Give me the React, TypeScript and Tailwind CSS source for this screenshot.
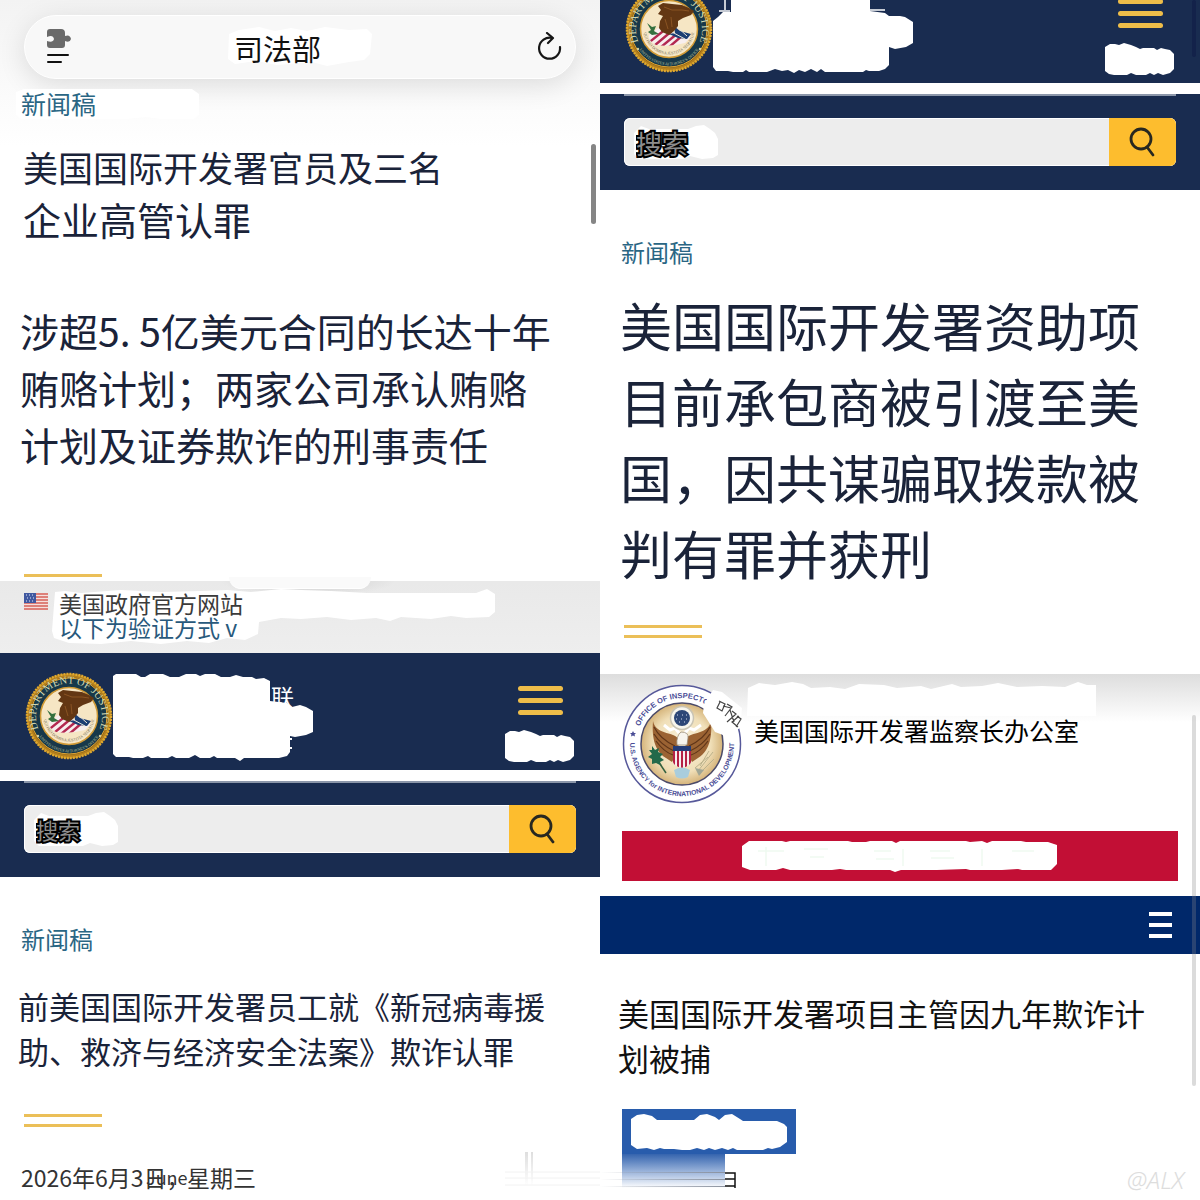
import React from "react";

function JusticeSeal({ id }: { id: string }) {
  return (
    <svg viewBox="0 0 88 88" className="h-[88px] w-[88px] shrink-0" role="img" aria-label="Department of Justice">
      <defs>
        <path id={`${id}-top`} d="M16 62 A33 33 0 1 1 72 62" />
        <path id={`${id}-low`} d="M9 54 A36.500 36.500 0 0 0 79 54" />
        <path id={`${id}-motto`} d="M18.500 44 A25.500 25.500 0 0 0 69.500 44" />
        <clipPath id={`${id}-shield`}>
          <path d="M24 50 L33 43 L66 52 L60 58 Q45 62 31 60 Q23 56 24 50Z" />
        </clipPath>
      </defs>
      <circle cx="44" cy="44" r="42.500" fill="#b5801d" />
      <circle cx="44" cy="44" r="42" fill="none" stroke="#e0a92f" strokeWidth="2.500" strokeDasharray="2 1" />
      <circle cx="44" cy="44" r="39" fill="#8a5f17" />
      <circle cx="44" cy="44" r="38" fill="#17384a" stroke="#dca433" strokeWidth="1" />
      <circle cx="44" cy="44" r="28.500" fill="#f6e6c4" stroke="#d09a35" strokeWidth="1.500" />
      <text fontFamily="Liberation Serif, serif" fontSize="10.500" fill="#d3d8b0">
        <textPath href={`#${id}-top`} startOffset="50%" textAnchor="middle">DEPARTMENT OF JUSTICE</textPath>
      </text>
      <text fontFamily="Liberation Serif, serif" fontSize="4" fill="#b9c19c">
        <textPath href={`#${id}-low`} startOffset="50%" textAnchor="middle">UNITED STATES ATTORNEY'S OFFICE</textPath>
      </text>
      <text fontFamily="Liberation Serif, serif" fontSize="4" fill="#736c58">
        <textPath href={`#${id}-motto`} startOffset="50%" textAnchor="middle">QUI PRO DOMINA JUSTITIA SEQUITUR</textPath>
      </text>
      <g clipPath={`url(#${id}-shield)`}>
        <rect x="22" y="42" width="46" height="22" fill="#f7eeee" />
        <path d="M22 59 L42 43 M29 61 L48 45 M36 62 L53 48 M43 63 L58 50" stroke="#b32850" strokeWidth="2.400" />
      </g>
      <path d="M22 38 L27 42 L31 41 L29 46 L34 49 L27 50 L23 47 L26 45 Z" fill="#35703f" />
      <path d="M49 41 L55 46 L66 49 L62 54 L53 53 L44 49 L50 48Z" fill="#1c3e73" />
      <path d="M50 40 L62 51 M47 47 L60 54" stroke="#e8e4d8" strokeWidth="1" />
      <path d="M33 21 L38 18 L47 19 L57 20 L64 23 L69 26 L66 30 L58 33 L53 36 L53 41 L49 46 L44 50 L37 47 L34 43 L35 36 L38 31 L33 29 L36 25Z" fill="#633713" />
      <path d="M39 22 L47 25 L57 25 L64 26 M40 34 L43 44 M46 32 L47 42" stroke="#8a5423" strokeWidth="1" fill="none" />
      <circle cx="13" cy="64" r="1.200" fill="#d6d1a0" />
      <circle cx="75" cy="64" r="1.200" fill="#d6d1a0" />
    </svg>
  );
}

function InspectorSeal() {
  return (
    <svg viewBox="0 0 120 120" className="h-[120px] w-[120px] shrink-0" role="img" aria-label="Office of Inspector General">
      <defs>
        <path id="oig-top" d="M14 60 A46 46 0 0 1 106 60" />
        <path id="oig-low" d="M9 50 A52 52 0 1 0 111 50" />
        <radialGradient id="oig-fill">
          <stop offset="0" stopColor="#fbf4df" />
          <stop offset="0.700" stopColor="#f0dfb8" />
          <stop offset="1" stopColor="#d5b47a" />
        </radialGradient>
        <clipPath id="oig-shield">
          <path d="M51 62 H69 V78 Q68 82 60 84 Q52 82 51 78Z" />
        </clipPath>
      </defs>
      <circle cx="60" cy="60" r="58.500" fill="#fff" stroke="#57599a" strokeWidth="1.500" />
      <circle cx="60" cy="60" r="41" fill="url(#oig-fill)" stroke="#4b4a68" strokeWidth="1.500" />
      <g fontFamily="Liberation Sans, sans-serif" fontWeight="700" fill="#4a4d96">
        <text fontSize="7.500"><textPath href="#oig-top" startOffset="18">OFFICE OF INSPECTOR</textPath></text>
        <text fontSize="6.800"><textPath href="#oig-low" startOffset="50%" textAnchor="middle">U.S. AGENCY for INTERNATIONAL DEVELOPMENT</textPath></text>
      </g>
      <path d="M11 47 l1 2 2 0 -1.500 1.500 .5 2 -2-1 -2 1 .5-2 -1.500-1.500 2 0Z" fill="#4a4d96" />
      <path d="M57 55 C50 47 34 51 31 37 C30 50 31 66 44 74 L50 78 L56 67Z M63 55 C70 47 86 51 89 37 C90 50 89 66 76 74 L70 78 L64 67Z" fill="#9b6333" />
      <path d="M32 43 Q38 55 53 62 M32 50 Q39 61 52 67 M34 57 Q42 68 51 71 M88 43 Q82 55 67 62 M88 50 Q81 61 68 67 M86 57 Q78 68 69 71" stroke="#5f3518" strokeWidth="1.200" fill="none" />
      <path d="M42 41 L48 46 L53 44 L57 49 M79 41 L72 46 L67 44 L63 49" stroke="#fff" strokeWidth="3" fill="none" />
      <circle cx="60" cy="34" r="11.500" fill="#f8f6ed" stroke="#c9c4b4" strokeWidth="1.500" />
      <circle cx="60" cy="34" r="8" fill="#2d4777" />
      <path d="M55 31h1m4 0h1m3 0h1M54 35h1m4 0h1m4 0h1M57 38h1m4 0h1" stroke="#d8def0" strokeWidth="1.200" />
      <path d="M55 61 Q54 52 59 48 Q67 48 66 54 L65 61Z" fill="#f7f5ee" stroke="#9a8d78" strokeWidth="0.800" />
      <g clipPath="url(#oig-shield)">
        <rect x="51" y="61" width="18" height="24" fill="#f6edef" />
        <path d="M52 61v24M56 61v24M60 61v24M64 61v24M68 61v24" stroke="#b52046" strokeWidth="2" />
        <rect x="50" y="61" width="20" height="6" fill="#253d77" />
      </g>
      <path d="M30 62 L33 66 L37 64 L36 68 L41 70 L38 73 L42 76 L38 78 L40 82 L34 79 L30 80 L30 75 L26 73 L30 70 L27 66 L30 66Z" fill="#22694a" />
      <path d="M38 80 L44 89" stroke="#35613f" strokeWidth="1.500" />
      <path d="M76 87 L91 68 M78 82 L87 67 M73 84 L86 73 M80 87 L92 75" stroke="#bbb28c" strokeWidth="1" />
      <path d="M73 84 L82 86 L77 92Z" fill="#a0a695" />
      <path d="M52 86 Q60 81 68 86 L66 93 Q60 96 54 93Z" fill="#a9cddd" />
      <path d="M82 20 L91 6 L100 8 L120 24 L118 44 L112 48 L101 51 L93 48 L88 40 L81 29Z" fill="#fff" />
      <path d="M97 17 l6 3 -3 7 -5 -3 3 -6 m7 2 5 3 -7 9 m6 -8 -8 -2 m9 5 4 3 -9 8 m3 -12 4 12 m3 -6 4 3 -5 8 m3 -11 -7 6 6 5" stroke="#444" strokeWidth="1.200" fill="none" />
    </svg>
  );
}

function Flag() {
  return (
    <svg viewBox="0 0 24 17" className="h-[17px] w-6 shrink-0" aria-label="美国国旗" role="img">
      <rect width="24" height="17" fill="#f5dfdc" />
      <path d="M0 1H24M0 4H24M0 7H24M0 10H24M0 13H24M0 16H24" stroke="#d56158" strokeWidth="1.500" />
      <rect width="12" height="10" fill="#4058a0" />
      <path d="M2 2h1m2 0h1m2 0h1M3 5h1m2 0h1m2 0h1M2 8h1m2 0h1m2 0h1" stroke="#e4e8f5" />
    </svg>
  );
}

function JusticeHeader({ id, children }: { id: string; children: React.ReactNode }) {
  return (
    <header className="flex h-[117px] shrink-0 items-start bg-[#192c50] pl-[25px] pr-[25px]">
      <div className="mt-[19px]"><JusticeSeal id={id} /></div>
      <div className="relative mt-[19px] h-[92px] w-[204px]">{children}</div>
      <div className="ml-auto mt-[33px] flex flex-col items-center">
        <button type="button" aria-label="菜单" className="flex w-[45px] flex-col gap-[7px]">
          <span className="h-[5px] rounded-full bg-[#eebd49]" />
          <span className="h-[5px] rounded-full bg-[#eebd49]" />
          <span className="h-[5px] rounded-full bg-[#eebd49]" />
        </button>
        <svg viewBox="0 0 70 34" className="mt-[15px] h-[34px] w-[70px]" aria-hidden="true">
          <path fill="#fff" d="M0 4 L5 1 H10 L14 2 L19 0 L26 2 L31 4 L35 6 L38 5 H49 L52 7 L56 5 L60 6 L65 7 L69 11 V26 L65 30 L58 32 L53 30 L49 32 L45 30 L41 32 H31 L26 30 L22 32 H9 L4 31 L0 28Z" />
        </svg>
      </div>
    </header>
  );
}

function SearchBand({ id, large = false }: { id: string; large?: boolean }) {
  return (
    <>
      <div className="h-[11px] shrink-0 bg-white" />
      <div className="bg-[#192c50] px-6 pb-6">
        <div className="h-0.5 bg-[#8c97aa]" />
        <form className="mt-[22px] flex h-12 overflow-hidden rounded-md bg-[#ededed] ring-1 ring-inset ring-white" onSubmit={(e) => e.preventDefault()}>
          <div className="relative min-w-0 flex-1">
            <svg viewBox="0 0 96 48" className="absolute left-0 top-0 h-12 w-24" aria-hidden="true">
              <path fill="#fff" d="M10 15 L17 8 L25 11 H64 L72 8 L80 7 L86 11 L91 15 L94 21 V37 L89 40 L78 41 L66 38 L59 41 H15 L10 36Z" />
            </svg>
            <input
              id={id}
              type="text"
              aria-label="站内搜索"
              defaultValue="搜索"
              className={
                (large ? "text-[26px] " : "text-[22px] ") +
                "relative h-full w-full bg-transparent pl-3 text-[#8d8d8d] outline-none [-webkit-text-stroke:4px_black] [paint-order:stroke_fill]"
              }
            />
          </div>
          <button type="submit" aria-label="提交搜索" className="flex w-[67px] items-center justify-center bg-[#fdbd2e]">
            <svg viewBox="0 0 28 32" className="h-8 w-7" fill="none" stroke="#282820" strokeWidth="2.800" strokeLinecap="round">
              <circle cx="12" cy="13" r="10" />
              <path d="M18 21 L24 29" />
            </svg>
          </button>
        </form>
      </div>
    </>
  );
}

function DoubleRule() {
  return (
    <div className="ml-6 flex w-[78px] flex-col gap-[7px]" aria-hidden="true">
      <span className="h-[3px] bg-[#ebbf58]" />
      <span className="h-[3px] bg-[#ebbf58]" />
    </div>
  );
}

function BrowserBar() {
  return (
    <div className="mx-6 flex h-16 items-center justify-between rounded-full border border-white bg-[#f8f8f8] pl-[21px] pr-3 shadow-[0_6px_28px_rgba(0,0,0,0.12)]">
      <button type="button" aria-label="页面选项">
        <svg viewBox="0 0 26 36" className="h-9 w-[26px]">
          <path d="M4 0H15Q19 0 19 4V7Q24 5 25 10Q24 14 19 12V16Q19 19 16 19H4Q1 19 1 16V12Q7 14 8 10Q7 5 1 8V3Q1 0 4 0Z" fill="#6a6a6a" />
          <path d="M2 26H22M2 33H15" stroke="#111" strokeWidth="2" strokeLinecap="round" />
        </svg>
      </button>
      <div className="relative mr-[54px] pt-1">
        <svg viewBox="0 0 146 42" className="absolute -left-[7px] -top-[3px] h-[42px] w-[146px]" aria-hidden="true">
          <path fill="#fff" d="M2 9 L12 5 L32 2 L48 6 L64 3 L80 6 L98 2 L122 5 L140 4 L145 9 L143 29 L137 35 L122 37 L100 41 L85 37 L50 40 L29 36 L8 39 L1 34Z" />
        </svg>
        <span className="relative text-[29px] leading-8 text-[#111]">司法部</span>
      </div>
      <button type="button" aria-label="重新加载">
        <svg viewBox="0 0 26 30" className="h-[30px] w-[26px]" fill="none" stroke="#161616" strokeWidth="2.200" strokeLinecap="round" strokeLinejoin="round">
          <path d="M15 6 A10.500 10.500 0 1 0 23 15" />
          <path d="M10 1 L16 6 L11 11" />
        </svg>
      </button>
    </div>
  );
}

function LeftColumn() {
  return (
    <div className="relative min-w-0 overflow-hidden">
      <section className="relative bg-linear-to-b from-[#f3f3f3] to-white to-25% pb-1 pt-[15px]">
        <BrowserBar />
        <div className="relative mt-2 pl-[21px]">
          <svg viewBox="0 0 184 34" className="absolute left-4 top-[2px] h-[34px] w-[184px]" aria-hidden="true">
            <path fill="#fff" d="M0 3 L8 0 H176 L183 5 V26 L178 30 H145 L130 28 L110 30 H5 L0 26Z" />
          </svg>
          <a href="#news" className="relative block text-[25px] leading-8 text-[#2a6684]">新闻稿</a>
        </div>
        <h1 className="mt-[22px] pl-[23px] text-[35px] leading-[52px] text-[#1a2339]">
          美国国际开发署官员及三名<br /><span className="text-[38px]">企业高管认罪</span>
        </h1>
        <h2 className="mt-14 pl-5 text-[39px] leading-[57px] whitespace-nowrap text-[#1a2339]">
          涉超5. 5亿美元合同的长达十年<br />贿赂计划；两家公司承认贿赂<br />计划及证券欺诈的刑事责任
        </h2>
        <div className="ml-6 mt-[101px] h-[3px] w-[78px] bg-[#ebbf58]" />
        <div className="absolute right-1 top-36 h-20 w-[5px] rounded-full bg-[#858585]" />
      </section>

      <section className="relative flex bg-linear-to-b from-[#e9e9e9] to-[#eeeeee] px-6 pb-[14px] pt-[10px]">
        <div className="absolute left-[220px] top-0 h-4 w-44 bg-[radial-gradient(ellipse_at_top,#cccccc,transparent_70%)]" />
        <div className="absolute -top-1 left-[229px] h-3 w-[142px] rounded-b-[14px] border-b border-white bg-[#fafafa]" />
        <svg viewBox="0 0 446 58" className="absolute left-[51px] top-[7px] h-[58px] w-[446px]" aria-hidden="true">
          <path fill="#fff" d="M4 4 L14 3 L30 5 L70 2 L110 4 L150 3 L176 2 L200 4 L230 1 L250 2 L280 3 L316 5 H425 L436 1 L444 6 V24 L438 29 L415 30 L400 28 L380 31 L350 29 L339 33 L325 30 L300 32 L276 29 L250 31 L230 30 L208 34 L207 46 L194 52 L176 50 L158 55 L136 53 L110 56 L80 53 L50 56 L18 55 L3 50 L1 43Z" />
        </svg>
        <div className="pt-0.5"><Flag /></div>
        <div className="relative ml-[11px] text-[23px] leading-6">
          <p className="text-[#3b3b3b]">美国政府官方网站</p>
          <button type="button" className="block text-[#28597c]">以下为验证方式 v</button>
        </div>
      </section>

      <JusticeHeader id="doj-left">
        <span className="absolute left-[158px] top-2 text-[23px] leading-8 text-white">联</span>
        <svg viewBox="0 0 204 92" className="absolute inset-0 h-full w-full" aria-hidden="true">
          <path fill="#fff" d="M0 4 L3 2 H23 L28 5 H32 L37 2 H50 L57 5 H66 L73 2 H83 L87 4 L92 2 H102 L108 5 H117 L123 3 L130 5 H139 L143 7 L151 6 L157 9 V29 L174 31 L179 35 L187 33 L193 35 L200 39 V60 L193 63 L182 65 L177 64 V80 L174 84 L166 86 H131 L127 89 L122 86 H104 L101 84 L97 86 H87 L82 83 L76 86 H63 L59 84 L55 86 H38 L35 84 L30 86 H20 L16 85 H3 L0 82Z" />
          <path d="M176 67h3M176 76h3" stroke="#fff" strokeWidth="2" />
        </svg>
      </JusticeHeader>
      <SearchBand id="search-left" />

      <section className="bg-white pb-1 pt-[46px]">
        <a href="#news" className="ml-[21px] block text-2xl leading-8 text-[#2a6684]">新闻稿</a>
        <h2 className="mt-7 whitespace-nowrap pl-[18px] text-[31px] leading-[45px] text-[#1a2339]">
          前美国国际开发署员工就《新冠病毒援<br />助、救济与经济安全法案》欺诈认罪
        </h2>
        <div className="mt-[41px]"><DoubleRule /></div>
        <p className="relative mt-[34px] pl-[21px] text-[23px] leading-8 text-[#333]">
          2026年6月3日，
          <span className="absolute left-[146px] top-0 text-[18px]">June</span>
          <span className="absolute left-[187px] top-0">星期三</span>
        </p>
      </section>
    </div>
  );
}

function RightColumn() {
  return (
    <div className="relative min-w-0 overflow-hidden">
      <div className="flex h-[83px] flex-col justify-end overflow-hidden">
        <JusticeHeader id="doj-right">
          <svg viewBox="0 0 204 92" className="absolute inset-0 h-full w-full" aria-hidden="true">
            <path fill="#fff" d="M18 0 H157 V26 L172 28 L176 31 L187 31 L192 32 L200 37 V58 L193 62 L182 64 L176 62 V80 L172 84 L166 86 H156 L153 85 L150 87 H112 L108 84 L104 87 L98 84 L92 87 L86 85 L81 88 L75 85 L69 86 L62 84 L54 87 H36 L33 85 L30 87 H20 L15 86 H3 L0 82 V36 L5 32 L10 27 H18Z" />
            <path d="M12 0V25M6 26H17M157 25H172" stroke="#fff" strokeWidth="1.500" />
          </svg>
        </JusticeHeader>
      </div>
      <div className="absolute right-1 top-0 h-[57px] w-1 rounded-full bg-[#13224a]" />
      <SearchBand id="search-right" large />

      <section className="bg-white pb-9 pt-[46px]">
        <a href="#news" className="ml-[21px] block text-2xl leading-8 text-[#2a6684]">新闻稿</a>
        <h1 className="mt-[19px] whitespace-nowrap pl-5 text-[52px] leading-[76px] text-[#1a2339]">
          美国国际开发署资助项<br />目前承包商被引渡至美<br />国，因共谋骗取拨款被<br />判有罪并获刑
        </h1>
        <div className="mt-[34px]"><DoubleRule /></div>
      </section>

      <section className="relative bg-white">
        <div className="absolute inset-x-0 top-0 h-12 bg-linear-to-b from-[#dddddd] to-transparent" />
        <svg viewBox="0 0 350 36" className="absolute left-[147px] top-[6px] h-9 w-[350px]" aria-hidden="true">
          <path fill="#fff" d="M1 8 L12 3 L28 5 L45 2 L56 4 L64 8 L83 7 L98 9 L112 4 L137 5 L150 8 L174 6 L184 9 L205 4 L214 7 L235 6 L251 3 L270 7 L295 6 L318 7 L331 2 L340 5 H349 V36 H0Z" />
        </svg>
        <div className="relative flex pl-[22px] pt-[10px]">
          <InspectorSeal />
          <p className="ml-3 mt-[30px] text-[25px] leading-8 text-black">美国国际开发署监察长办公室</p>
        </div>
        <div className="mx-[22px] mt-[27px] flex h-[50px] items-center justify-center bg-[#c20f35]">
          <svg viewBox="0 0 316 34" className="h-[34px] w-[316px]" aria-hidden="true">
            <path fill="#fff" d="M0 7 L7 2 H40 L44 3 L48 2 H106 L110 3 H124 L128 2 H150 L154 4 L158 2 H224 L228 3 L240 2 L245 4 L250 2 H279 L284 3 H306 L315 6 V25 L309 31 H280 L276 30 L260 31 H228 L224 30 L195 31 H159 L153 33 L148 31 H104 L98 30 L90 31 H48 L41 29 L34 31 H8 L0 28Z" />
            <path d="M16 12H42M24 8V27M62 10H86M68 18H82M132 12H149M134 20H152M161 10V27M188 12H208M189 19H212M240 10V27M270 12H292" stroke="#effaf1" strokeWidth="1.500" />
          </svg>
        </div>
        <nav className="mt-[15px] flex h-[58px] items-center justify-end bg-[#00286a] pr-7">
          <button type="button" aria-label="导航" className="flex w-[23px] flex-col gap-[7px]">
            <span className="h-1 bg-white" />
            <span className="h-1 bg-white" />
            <span className="h-1 bg-white" />
          </button>
        </nav>
        <h2 className="mt-9 whitespace-nowrap pl-[18px] text-[31px] leading-[45px] text-[#111]">
          美国国际开发署项目主管因九年欺诈计<br />划被捕
        </h2>
        <div className="ml-[22px] mt-[29px] h-[45px] w-[174px] bg-[#285cac]">
          <svg viewBox="0 0 174 45" className="h-full w-full" aria-hidden="true">
            <path fill="#fff" d="M9 10 L15 6 L22 5 L30 7 L35 11 H72 L78 6 L85 5 L93 8 L97 11 L103 6 L110 5 L118 10 L121 12 H155 L162 15 L165 18 V33 L158 38 L150 40 L146 39 L141 41 H115 L111 39 L106 41 L100 39 L93 41 L87 39 L82 41 L75 39 L68 41 H60 L52 40 H42 L38 39 L32 41 L25 39 L15 40 L9 36Z" />
          </svg>
        </div>
        <div className="relative flex h-[46px] items-start pl-[22px]">
          <div className="h-[34px] w-[103px] bg-linear-to-b from-[#3564ae] to-white" />
          <svg viewBox="0 0 14 34" className="h-[34px] w-[14px]" fill="none" stroke="#111" strokeWidth="1.500" aria-hidden="true">
            <path d="M0 19H10V34M0 25H10M0 32H10" />
          </svg>
          <div className="absolute left-0 top-[18px] flex w-[125px] flex-col gap-[6px]">
            <span className="h-px bg-linear-to-r from-transparent to-[#8c93a0]" />
            <span className="h-px bg-linear-to-r from-transparent to-[#8c93a0]" />
            <span className="h-px bg-linear-to-r from-transparent to-[#8c93a0]" />
          </div>
        </div>
        <div className="absolute right-1 top-[41px] h-[371px] w-1 rounded-full bg-[#888]/30" />
        <span className="absolute bottom-1 right-4 font-['Noto_Sans'] text-[24px] font-light leading-8 text-[#dddddd] italic">@ALX</span>
      </section>
    </div>
  );
}

export default function App() {
  return (
    <main className="relative grid grid-cols-2 overflow-hidden bg-white font-['Noto_Sans_CJK_SC',sans-serif]">
      <LeftColumn />
      <RightColumn />
      <svg viewBox="0 0 120 44" className="absolute bottom-1 right-1/2 h-11 w-[120px]" aria-hidden="true">
        <defs>
          <linearGradient id="streak" x1="0" y1="0" x2="0" y2="1">
            <stop offset="0" stopColor="#dedede" />
            <stop offset="1" stopColor="#ffffff" />
          </linearGradient>
        </defs>
        <path d="M45 0h3v34h-3Z M51 0h2v34h-2Z" fill="url(#streak)" />
        <path d="M25 20H120M25 26H120M25 33H120" stroke="#f2f2f2" />
      </svg>
    </main>
  );
}
